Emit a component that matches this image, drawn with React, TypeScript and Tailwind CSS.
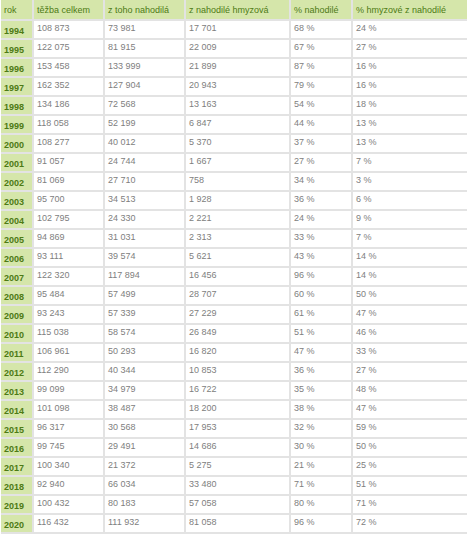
const headers = ['rok', 'těžba celkem', 'z toho nahodilá', 'z nahodilé hmyzová', '% nahodilé', '% hmyzové z nahodilé'];

const rows: string[][] = [
    ['1994', '108 873', '73 981', '17 701', '68 %', '24 %'],
    ['1995', '122 075', '81 915', '22 009', '67 %', '27 %'],
    ['1996', '153 458', '133 999', '21 899', '87 %', '16 %'],
    ['1997', '162 352', '127 904', '20 943', '79 %', '16 %'],
    ['1998', '134 186', '72 568', '13 163', '54 %', '18 %'],
    ['1999', '118 058', '52 199', '6 847', '44 %', '13 %'],
    ['2000', '108 277', '40 012', '5 370', '37 %', '13 %'],
    ['2001', '91 057', '24 744', '1 667', '27 %', '7 %'],
    ['2002', '81 069', '27 710', '758', '34 %', '3 %'],
    ['2003', '95 700', '34 513', '1 928', '36 %', '6 %'],
    ['2004', '102 795', '24 330', '2 221', '24 %', '9 %'],
    ['2005', '94 869', '31 031', '2 313', '33 %', '7 %'],
    ['2006', '93 111', '39 574', '5 621', '43 %', '14 %'],
    ['2007', '122 320', '117 894', '16 456', '96 %', '14 %'],
    ['2008', '95 484', '57 499', '28 707', '60 %', '50 %'],
    ['2009', '93 243', '57 339', '27 229', '61 %', '47 %'],
    ['2010', '115 038', '58 574', '26 849', '51 %', '46 %'],
    ['2011', '106 961', '50 293', '16 820', '47 %', '33 %'],
    ['2012', '112 290', '40 344', '10 853', '36 %', '27 %'],
    ['2013', '99 099', '34 979', '16 722', '35 %', '48 %'],
    ['2014', '101 098', '38 487', '18 200', '38 %', '47 %'],
    ['2015', '96 317', '30 568', '17 953', '32 %', '59 %'],
    ['2016', '99 745', '29 491', '14 686', '30 %', '50 %'],
    ['2017', '100 340', '21 372', '5 275', '21 %', '25 %'],
    ['2018', '92 940', '66 034', '33 480', '71 %', '51 %'],
    ['2019', '100 432', '80 183', '57 058', '80 %', '71 %'],
    ['2020', '116 432', '111 932', '81 058', '96 %', '72 %'],
];

export default function App() {
    return (
        <div className="w-[467px] h-[538px] bg-white font-['Liberation_Sans',Arial,sans-serif] text-[9px] leading-[10px]">
            <div className="ml-[1px] grid grid-cols-[31px_69px_79px_103px_60px_114px] gap-[2px] bg-[#e3e3e3] pb-[2px]">
                {headers.map((h, i) => (
                    <div
                        key={h}
                        className={`h-[19px] flex items-center bg-[#d5e6aa] text-[#4d7a14] ${i === 0 ? 'pl-[3px]' : 'pl-[3px]'}`}
                    >
                        {h}
                    </div>
                ))}
                {rows.map((row) =>
                    row.map((cell, i) =>
                        i === 0 ? (
                            <div
                                key={row[0] + i}
                                className="h-[17px] flex items-center pt-[2px] pl-[3px] bg-[#d5e6aa] text-[#4d7a14] font-bold"
                            >
                                {cell}
                            </div>
                        ) : (
                            <div key={row[0] + i} className="h-[17px] pt-[2px] pl-[3px] bg-white text-[#808080]">
                                {cell}
                            </div>
                        )
                    )
                )}
            </div>
        </div>
    );
}
